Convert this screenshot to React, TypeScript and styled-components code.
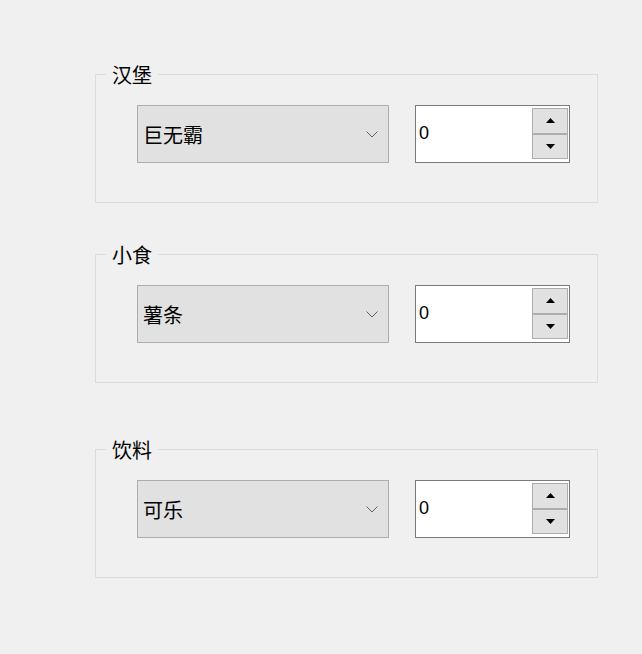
import React from 'react';
import styled, {createGlobalStyle} from 'styled-components';

const GlobalStyle = createGlobalStyle`
  html, body {
    margin: 0;
    padding: 0;
    background: #f0f0f0;
  }
  body {
    font-family: "Liberation Sans", "Noto Sans CJK SC", sans-serif;
    color: #000;
  }
`;

const Page = styled.div`
  width: 642px;
  height: 654px;
  box-sizing: border-box;
  padding: 74px 0 0 95px;
  display: flex;
  flex-direction: column;
`;

const Group = styled.div<{ $gap: number }>`
  position: relative;
  width: 503px;
  height: 129px;
  box-sizing: border-box;
  border: 1px solid #dcdcdc;
  margin-top: ${p => p.$gap}px;
  padding: 30px 0 0 41px;
  display: flex;
  align-items: flex-start;
  gap: 26px;
`;

const Caption = styled.span`
  position: absolute;
  top: -12px;
  left: 10px;
  padding: 0 6px;
  background: #f0f0f0;
  font-family: "Noto Sans CJK SC", sans-serif;
  font-size: 20px;
  line-height: 24px;
`;

const Combo = styled.div`
  width: 252px;
  height: 58px;
  box-sizing: border-box;
  border: 1px solid #adadad;
  background: #e1e1e1;
  display: flex;
  align-items: center;
  justify-content: space-between;
  padding: 0 10px 0 5px;
  font-family: "Noto Sans CJK SC", sans-serif;
  font-size: 20px;
`;

const Spin = styled.div`
  width: 155px;
  height: 58px;
  box-sizing: border-box;
  border: 1px solid #7a7a7a;
  background: #fff;
  display: flex;
  align-items: stretch;
  padding: 2px 1px 3px 0;
`;

const SpinValue = styled.div`
  flex: 1;
  display: flex;
  align-items: center;
  padding-left: 3px;
  font-size: 18px;
`;

const SpinButtons = styled.div`
  width: 36px;
  display: flex;
  flex-direction: column;
`;

const SpinButton = styled.div`
  flex: 1;
  box-sizing: border-box;
  border: 1px solid #adadad;
  background: #e1e1e1;
  display: flex;
  align-items: center;
  justify-content: center;
`;

const Chevron = () => (
  <svg width="12" height="7" viewBox="0 0 12 7">
    <path d="M0.5 0.5 L6 6 L11.5 0.5" fill="none" stroke="#606060" strokeWidth="1"/>
  </svg>
);

const Arrow = ({up}: { up: boolean }) => (
  <svg width="9" height="5" viewBox="0 0 9 5">
    <path d={up ? 'M0 5 L4.5 0 L9 5 Z' : 'M0 0 L4.5 5 L9 0 Z'} fill="#000"/>
  </svg>
);

const groups = [
  {title: '汉堡', item: '巨无霸', gap: 0},
  {title: '小食', item: '薯条', gap: 51},
  {title: '饮料', item: '可乐', gap: 66},
];

export default function App() {
  return (
    <Page>
      <GlobalStyle/>
      {groups.map(g =>
        <Group key={g.title} $gap={g.gap}>
          <Caption>{g.title}</Caption>
          <Combo>
            <span>{g.item}</span>
            <Chevron/>
          </Combo>
          <Spin>
            <SpinValue>0</SpinValue>
            <SpinButtons>
              <SpinButton><Arrow up/></SpinButton>
              <SpinButton><Arrow up={false}/></SpinButton>
            </SpinButtons>
          </Spin>
        </Group>
      )}
    </Page>
  );
}
